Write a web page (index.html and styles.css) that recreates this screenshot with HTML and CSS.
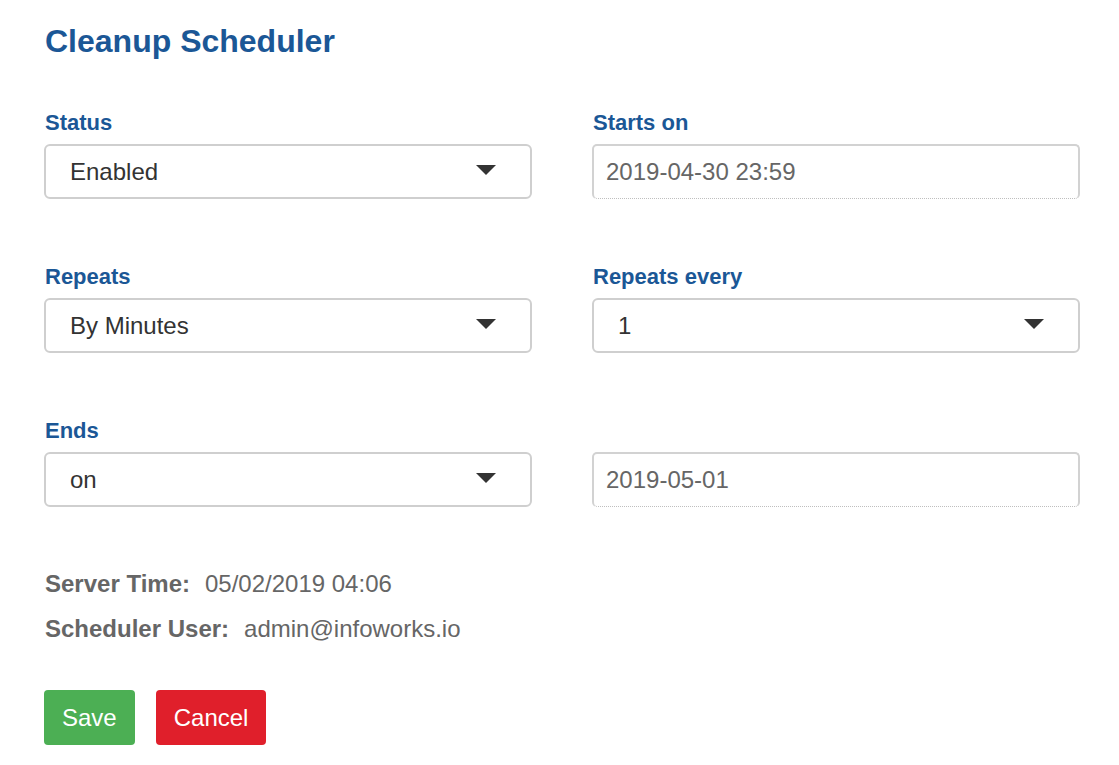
FILE: index.html
```html
<!DOCTYPE html>
<html lang="en">
<head>
  <meta charset="UTF-8" />
  <meta name="viewport" content="width=device-width, initial-scale=1.0" />
  <title>Cleanup Scheduler</title>
  <link rel="stylesheet" href="styles.css">
</head>
<body>
  <div class="container">
    <h1 class="title">Cleanup Scheduler</h1>

    <div class="form-grid">
      <div class="field">
        <label class="label">Status</label>
        <div class="select">
          <span>Enabled</span>
          <svg class="caret" width="20" height="10" viewBox="0 0 20 10"><path d="M0 0h20L10 10z" fill="#333"/></svg>
        </div>
      </div>
      <div class="field">
        <label class="label">Starts on</label>
        <div class="input">2019-04-30 23:59</div>
      </div>

      <div class="field">
        <label class="label">Repeats</label>
        <div class="select">
          <span>By Minutes</span>
          <svg class="caret" width="20" height="10" viewBox="0 0 20 10"><path d="M0 0h20L10 10z" fill="#333"/></svg>
        </div>
      </div>
      <div class="field">
        <label class="label">Repeats every</label>
        <div class="select">
          <span>1</span>
          <svg class="caret" width="20" height="10" viewBox="0 0 20 10"><path d="M0 0h20L10 10z" fill="#333"/></svg>
        </div>
      </div>

      <div class="field">
        <label class="label">Ends</label>
        <div class="select">
          <span>on</span>
          <svg class="caret" width="20" height="10" viewBox="0 0 20 10"><path d="M0 0h20L10 10z" fill="#333"/></svg>
        </div>
      </div>
      <div class="field">
        <label class="label">&nbsp;</label>
        <div class="input">2019-05-01</div>
      </div>
    </div>

    <div class="info">
      <p><strong>Server Time:</strong><span>05/02/2019 04:06</span></p>
      <p><strong>Scheduler User:</strong><span>admin@infoworks.io</span></p>
    </div>

    <div class="actions">
      <button class="btn btn-save">Save</button>
      <button class="btn btn-cancel">Cancel</button>
    </div>
  </div>
</body>
</html>
```

FILE: styles.css
```css
* {
  margin: 0;
  padding: 0;
  box-sizing: border-box;
}

body {
  background: #fff;
  font-family: "Liberation Sans", Arial, Helvetica, sans-serif;
}

.container {
  padding: 22px 0 0 44px;
}

.title {
  font-size: 32px;
  line-height: 38px;
  font-weight: bold;
  color: #1b5796;
  margin-left: 1px;
}

.form-grid {
  margin-top: 47px;
  display: grid;
  grid-template-columns: 488px 488px;
  column-gap: 60px;
  row-gap: 62px;
}

.field {
  display: flex;
  flex-direction: column;
}

.label {
  font-size: 22px;
  line-height: 26px;
  font-weight: bold;
  color: #1b5796;
  margin: 3px 0 8px 1px;
}

.select,
.input {
  height: 55px;
  display: flex;
  align-items: center;
  font-size: 24px;
}

.select {
  justify-content: space-between;
  padding: 0 34px 0 24px;
  color: #333;
  border: 2px solid #cfcfcf;
  border-radius: 6px;
}

.caret {
  display: block;
  margin-top: -3px;
}

.input {
  padding: 0 12px;
  color: #666;
  border: 2px solid #d2d2d2;
  border-bottom: 1px dotted #bdbdbd;
  border-radius: 5px;
}

.info {
  margin-top: 54px;
  color: #666;
  font-size: 24px;
  line-height: 45px;
}

.info p {
  margin-left: 1px;
}

.info strong {
  margin-right: 15px;
}

.actions {
  margin-top: 39px;
  display: flex;
  gap: 21px;
}

.btn {
  height: 55px;
  padding: 0 18px;
  border: none;
  border-radius: 4px;
  color: #fff;
  font-family: inherit;
  font-size: 24px;
}

.btn-save {
  background-color: #4caf54;
}

.btn-cancel {
  background-color: #e01f2b;
}
```
